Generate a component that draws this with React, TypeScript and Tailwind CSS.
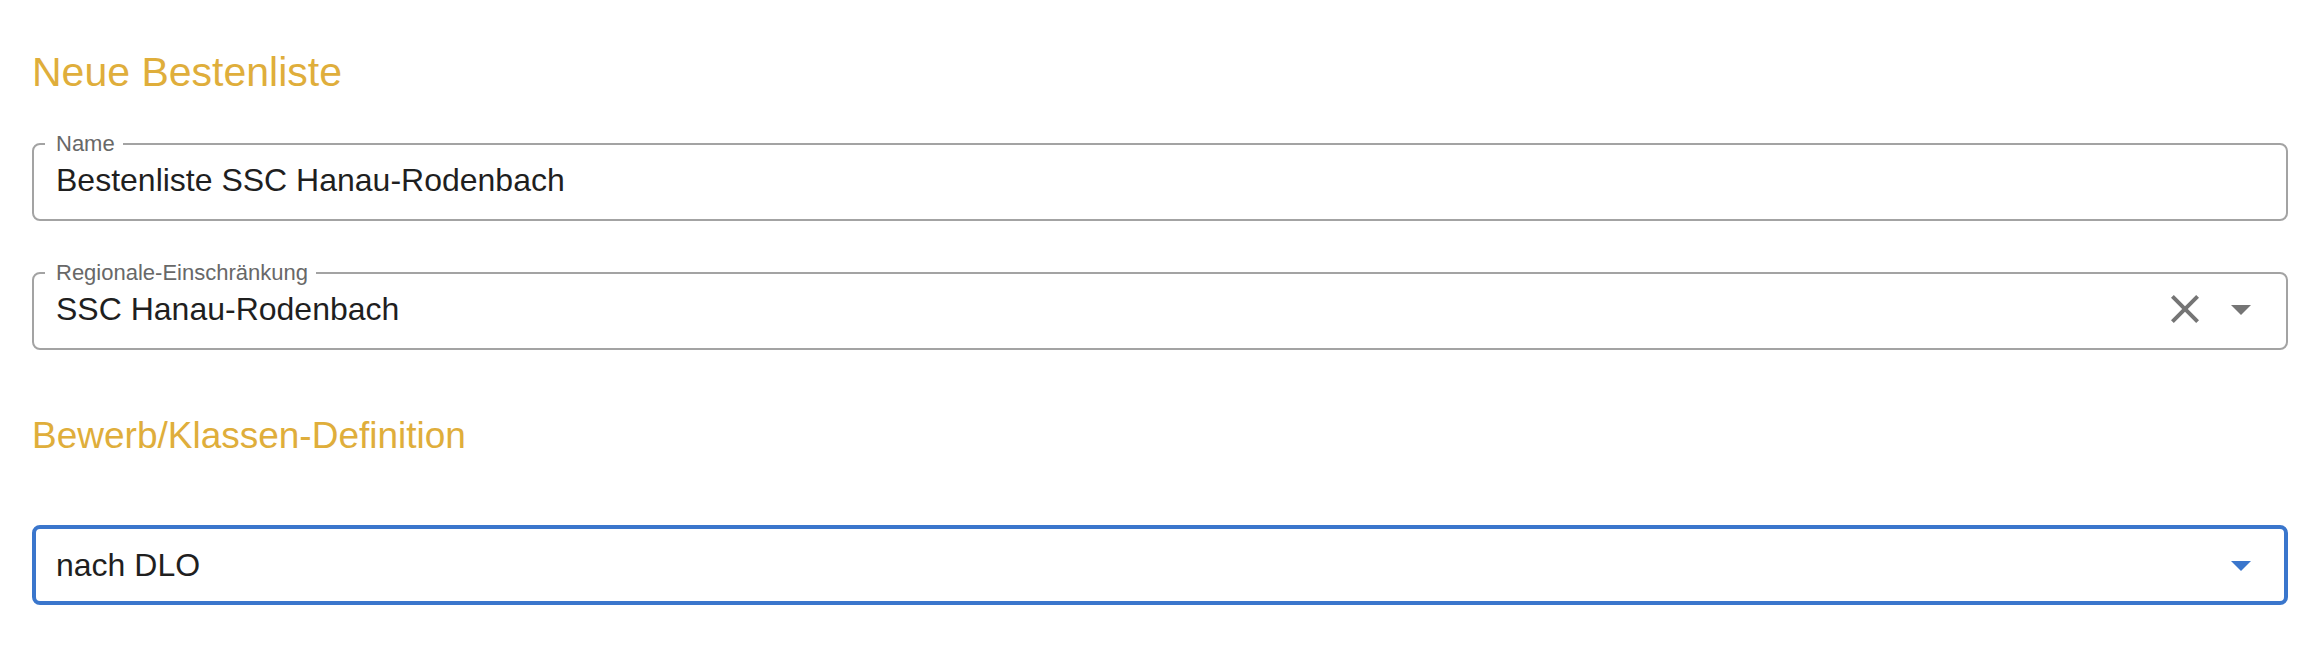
import React from "react";

function ClearIcon({ className }: { className?: string }) {
  return (
    <svg viewBox="0 0 24 24" className={className} fill="currentColor">
      <path d="M19 6.41 17.59 5 12 10.59 6.41 5 5 6.41 10.59 12 5 17.59 6.41 19 12 13.41 17.59 19 19 17.59 13.41 12z" />
    </svg>
  );
}

function ArrowDropDown({ className }: { className?: string }) {
  return (
    <svg viewBox="0 0 24 24" className={className} fill="currentColor">
      <path d="M7 10l5 5 5-5z" />
    </svg>
  );
}

interface OutlinedFieldProps {
  label: string;
  value: string;
  clearable?: boolean;
  select?: boolean;
}

function OutlinedField({ label, value, clearable, select }: OutlinedFieldProps) {
  return (
    <div className="relative flex h-[78px] items-center rounded-[8px] border-2 border-[#a3a3a3] pb-[4px] pl-[22px] pr-[21px]">
      {/* Label sitzt auf der Rahmenlinie */}
      <span className="absolute -top-[13px] left-[11px] bg-white pl-[11px] pr-[8px] text-[22px] leading-[24px] text-[#686868]">
        {label}
      </span>
      <span className="flex-1 text-[32px] leading-[40px] text-[#1f1f1f]">
        {value}
      </span>
      {clearable && <ClearIcon className="h-[48px] w-[48px] text-[#757575]" />}
      {select && (
        <ArrowDropDown className="ml-[8px] h-[48px] w-[48px] text-[#757575]" />
      )}
    </div>
  );
}

export default function App() {
  return (
    <div
      className="w-full bg-white pb-[59px] pl-8 pr-6 pt-[52px]"
      style={{ fontFamily: '"Liberation Sans", Arial, sans-serif' }}
    >
      <h1 className="text-[41px] leading-[40px] text-[#dfae3b]">
        Neue Bestenliste
      </h1>

      <div className="mt-[51px] flex flex-col gap-[51px]">
        <OutlinedField label="Name" value="Bestenliste SSC Hanau-Rodenbach" />
        <OutlinedField
          label="Regionale-Einschränkung"
          value="SSC Hanau-Rodenbach"
          clearable
          select
        />
      </div>

      <h2 className="mt-[66px] text-[37px] leading-[40px] text-[#dfae3b]">
        Bewerb/Klassen-Definition
      </h2>

      {/* Fokussiertes Select */}
      <div className="mt-[69px] flex h-[80px] items-center rounded-[8px] border-4 border-[#3a76cc] pl-[20px] pr-[19px]">
        <span className="flex-1 text-[32px] leading-[40px] text-[#1f1f1f]">
          nach DLO
        </span>
        <ArrowDropDown className="h-[48px] w-[48px] text-[#3a76cc]" />
      </div>
    </div>
  );
}
